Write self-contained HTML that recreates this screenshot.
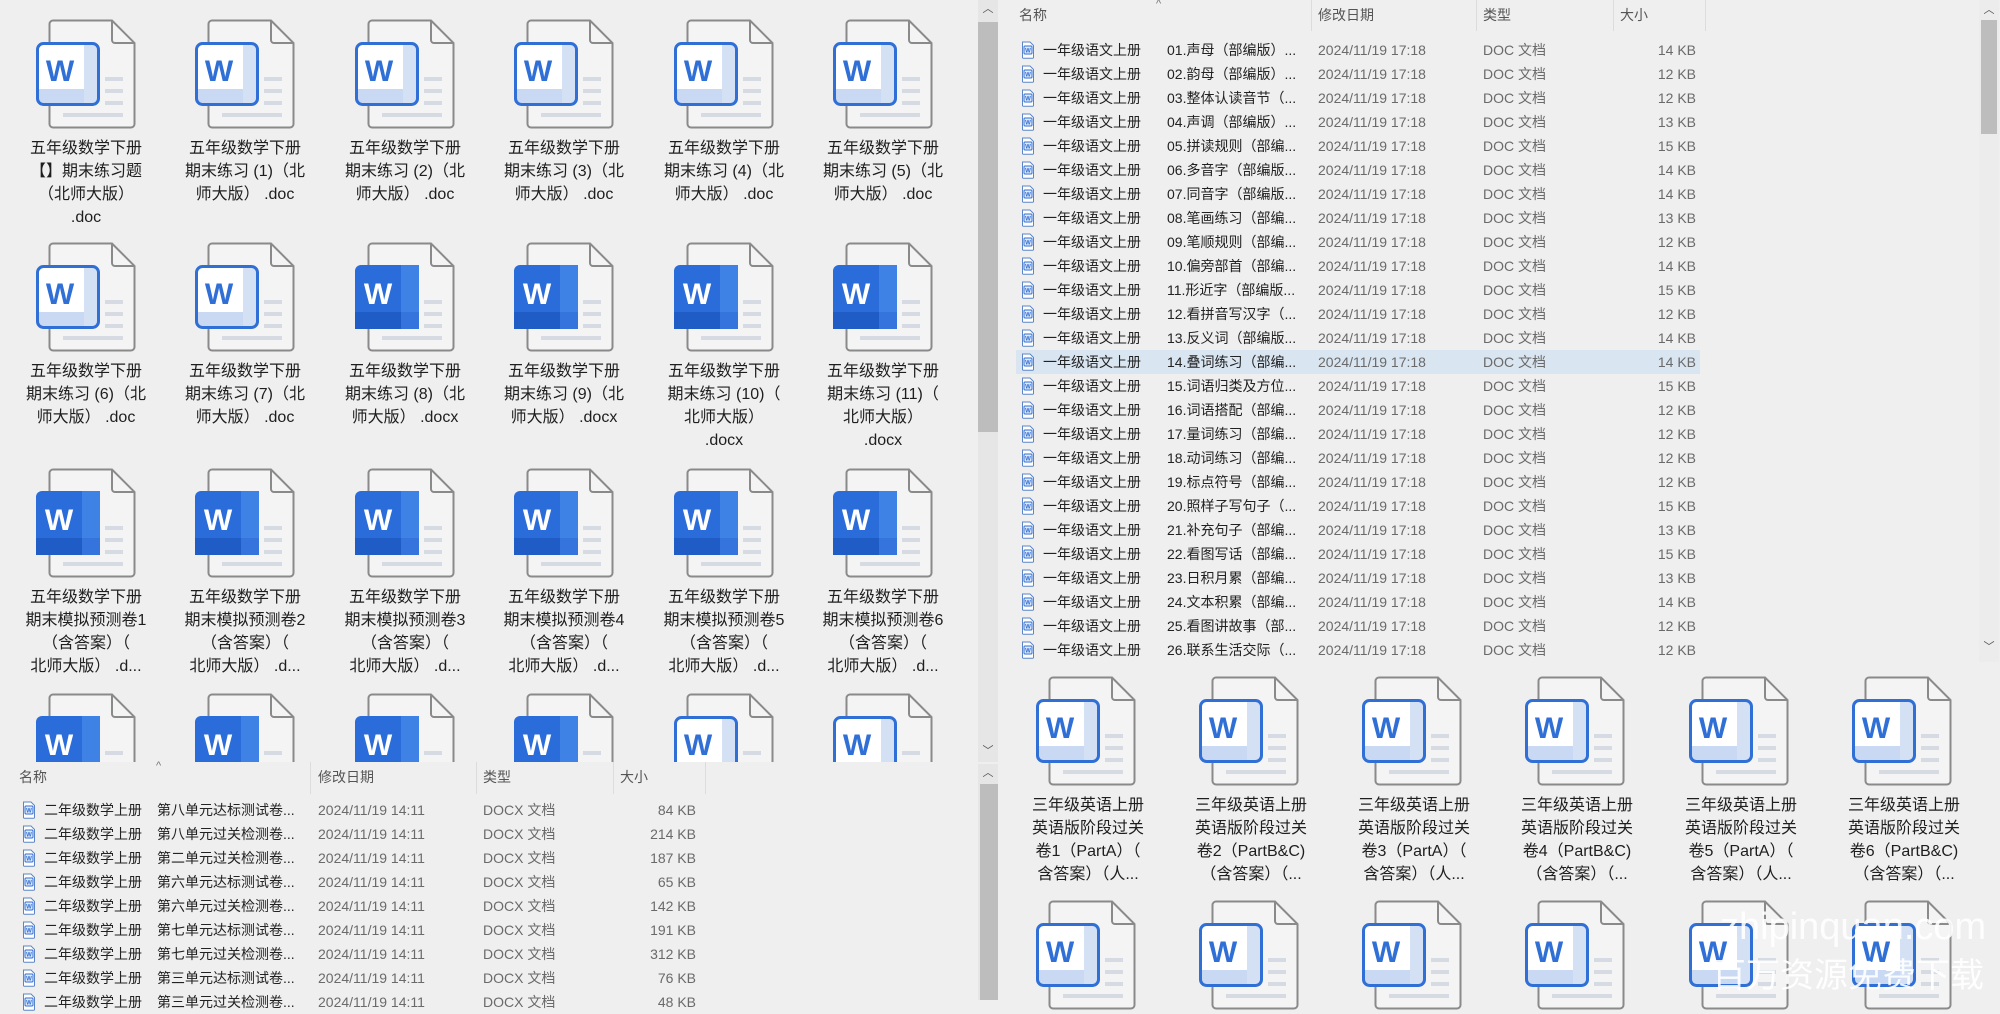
<!DOCTYPE html>
<html><head><meta charset="utf-8">
<style>
*{margin:0;padding:0;box-sizing:border-box}
body{width:2000px;height:1000px;overflow:hidden;background:#efefef;font-family:"Liberation Sans","Noto Sans CJK SC",sans-serif;position:relative;color:#222}
.a{position:absolute}
.ic{position:absolute;width:100px;height:110px}
.lb{position:absolute;width:170px;text-align:center;font-size:16px;line-height:23px;white-space:nowrap;color:#1e1e1e}
.hd{position:absolute;font-size:14px;color:#555;height:30px;line-height:30px}
.sep{position:absolute;width:1px;background:#dcdcdc}
.r{position:absolute;height:24px;line-height:24px;font-size:14px;white-space:nowrap}
.r span{position:absolute;top:0}
.g{color:#6a6a6a}
.sb{position:absolute;background:#e6e6e6;width:20px}
.th{position:absolute;background:#bdbdbd;width:20px}
.ar{position:absolute;width:20px;text-align:center;font-size:11px;color:#555;line-height:14px}
</style></head><body>
<svg width="0" height="0" style="position:absolute">
<defs>
<symbol id="pg" viewBox="0 0 100 110">
<path d="M17,1.5 H76 L98.5,24 V105 a3.5,3.5 0 0 1 -3.5,3.5 H17 a3.5,3.5 0 0 1 -3.5,-3.5 V5 a3.5,3.5 0 0 1 3.5,-3.5 Z" fill="#f4f4f4" stroke="#8a8a8a" stroke-width="2"/>
<path d="M76,1.5 V21 a3,3 0 0 0 3,3 H98.5" fill="none" stroke="#8a8a8a" stroke-width="2"/>
<rect x="69" y="58" width="18" height="4" fill="#d6dbe3"/>
<rect x="69" y="70" width="18" height="4" fill="#d6dbe3"/>
<rect x="69" y="82" width="18" height="4" fill="#d6dbe3"/>
<rect x="27" y="94" width="60" height="4" fill="#d6dbe3"/>
</symbol>
<symbol id="L" viewBox="0 0 100 110">
<use href="#pg"/>
<rect x="1.5" y="24.5" width="61" height="61" rx="6" fill="#fff"/>
<rect x="3" y="70" width="58" height="14" fill="#c9d9f3"/>
<rect x="48" y="26" width="13" height="58" fill="#d4e1f5"/>
<rect x="1.5" y="24.5" width="61" height="61" rx="6" fill="none" stroke="#2f6fd6" stroke-width="3"/>
<text x="24" y="62" font-family="Liberation Sans" font-weight="bold" font-size="30" fill="#2f6fd6" text-anchor="middle">W</text>
</symbol>
<symbol id="D" viewBox="0 0 100 110">
<use href="#pg"/>
<rect x="0" y="23" width="64" height="64" rx="6" fill="#2a6cd9"/>
<rect x="46" y="23" width="18" height="64" fill="#3f82e6"/>
<rect x="0" y="70" width="64" height="17" fill="#1f5cc6"/>
<rect x="46" y="70" width="18" height="17" fill="#3474dc"/>
<text x="23" y="62" font-family="Liberation Sans" font-weight="bold" font-size="30" fill="#fff" text-anchor="middle">W</text>
</symbol>
<symbol id="s" viewBox="0 0 14 18">
<path d="M1.5,1 H9 L12.5,4.5 V16.5 a0.8,0.8 0 0 1 -0.8,0.8 H2.3 a0.8,0.8 0 0 1 -0.8,-0.8 Z" fill="#fff" stroke="#5a86c8" stroke-width="1"/>
<rect x="3" y="5" width="8" height="8" rx="1" fill="#dfe9f8" stroke="#2f6fd6" stroke-width="1"/>
<text x="7" y="11.5" font-family="Liberation Sans" font-weight="bold" font-size="6" fill="#2f6fd6" text-anchor="middle">W</text>
</symbol>
</defs></svg>

<!-- ===== TOP-LEFT GRID ===== -->
<svg class="ic" style="left:36px;top:19px"><use href="#L"/></svg>
<svg class="ic" style="left:195px;top:19px"><use href="#L"/></svg>
<svg class="ic" style="left:355px;top:19px"><use href="#L"/></svg>
<svg class="ic" style="left:514px;top:19px"><use href="#L"/></svg>
<svg class="ic" style="left:674px;top:19px"><use href="#L"/></svg>
<svg class="ic" style="left:833px;top:19px"><use href="#L"/></svg>
<div class="lb" style="left:1px;top:137px">五年级数学下册<br>【】期末练习题<br>（北师大版）<br>.doc</div>
<div class="lb" style="left:160px;top:137px">五年级数学下册<br>期末练习 (1)（北<br>师大版） .doc</div>
<div class="lb" style="left:320px;top:137px">五年级数学下册<br>期末练习 (2)（北<br>师大版） .doc</div>
<div class="lb" style="left:479px;top:137px">五年级数学下册<br>期末练习 (3)（北<br>师大版） .doc</div>
<div class="lb" style="left:639px;top:137px">五年级数学下册<br>期末练习 (4)（北<br>师大版） .doc</div>
<div class="lb" style="left:798px;top:137px">五年级数学下册<br>期末练习 (5)（北<br>师大版） .doc</div>

<svg class="ic" style="left:36px;top:242px"><use href="#L"/></svg>
<svg class="ic" style="left:195px;top:242px"><use href="#L"/></svg>
<svg class="ic" style="left:355px;top:242px"><use href="#D"/></svg>
<svg class="ic" style="left:514px;top:242px"><use href="#D"/></svg>
<svg class="ic" style="left:674px;top:242px"><use href="#D"/></svg>
<svg class="ic" style="left:833px;top:242px"><use href="#D"/></svg>
<div class="lb" style="left:1px;top:360px">五年级数学下册<br>期末练习 (6)（北<br>师大版） .doc</div>
<div class="lb" style="left:160px;top:360px">五年级数学下册<br>期末练习 (7)（北<br>师大版） .doc</div>
<div class="lb" style="left:320px;top:360px">五年级数学下册<br>期末练习 (8)（北<br>师大版） .docx</div>
<div class="lb" style="left:479px;top:360px">五年级数学下册<br>期末练习 (9)（北<br>师大版） .docx</div>
<div class="lb" style="left:639px;top:360px">五年级数学下册<br>期末练习 (10)（<br>北师大版）<br>.docx</div>
<div class="lb" style="left:798px;top:360px">五年级数学下册<br>期末练习 (11)（<br>北师大版）<br>.docx</div>

<svg class="ic" style="left:36px;top:468px"><use href="#D"/></svg>
<svg class="ic" style="left:195px;top:468px"><use href="#D"/></svg>
<svg class="ic" style="left:355px;top:468px"><use href="#D"/></svg>
<svg class="ic" style="left:514px;top:468px"><use href="#D"/></svg>
<svg class="ic" style="left:674px;top:468px"><use href="#D"/></svg>
<svg class="ic" style="left:833px;top:468px"><use href="#D"/></svg>
<div class="lb" style="left:1px;top:586px">五年级数学下册<br>期末模拟预测卷1<br>（含答案）（<br>北师大版） .d...</div>
<div class="lb" style="left:160px;top:586px">五年级数学下册<br>期末模拟预测卷2<br>（含答案）（<br>北师大版） .d...</div>
<div class="lb" style="left:320px;top:586px">五年级数学下册<br>期末模拟预测卷3<br>（含答案）（<br>北师大版） .d...</div>
<div class="lb" style="left:479px;top:586px">五年级数学下册<br>期末模拟预测卷4<br>（含答案）（<br>北师大版） .d...</div>
<div class="lb" style="left:639px;top:586px">五年级数学下册<br>期末模拟预测卷5<br>（含答案）（<br>北师大版） .d...</div>
<div class="lb" style="left:798px;top:586px">五年级数学下册<br>期末模拟预测卷6<br>（含答案）（<br>北师大版） .d...</div>

<div class="a" style="left:0;top:0;width:978px;height:762px;overflow:hidden">
<svg class="ic" style="left:36px;top:693px"><use href="#D"/></svg>
<svg class="ic" style="left:195px;top:693px"><use href="#D"/></svg>
<svg class="ic" style="left:355px;top:693px"><use href="#D"/></svg>
<svg class="ic" style="left:514px;top:693px"><use href="#D"/></svg>
<svg class="ic" style="left:674px;top:693px"><use href="#L"/></svg>
<svg class="ic" style="left:833px;top:693px"><use href="#L"/></svg>
</div>

<!-- left scrollbars -->
<div class="sb" style="left:978px;top:0;height:762px"></div>
<div class="ar" style="left:978px;top:2px">︿</div>
<div class="th" style="left:978px;top:22px;height:410px"></div>
<div class="ar" style="left:978px;top:744px">﹀</div>
<div class="sb" style="left:978px;top:764px;height:236px"></div>
<div class="ar" style="left:978px;top:766px">︿</div>
<div class="th" style="left:980px;top:784px;height:216px;width:18px"></div>

<!-- ===== BOTTOM-LEFT LIST ===== -->
<div class="a" style="left:0;top:762px;width:978px;height:238px;background:#efefef"></div>
<div class="a" style="left:156px;top:760px;font-size:11px;color:#777">^</div>
<div class="hd" style="left:19px;top:762px">名称</div>
<div class="hd" style="left:318px;top:762px">修改日期</div>
<div class="hd" style="left:483px;top:762px">类型</div>
<div class="hd" style="left:620px;top:762px">大小</div>
<div class="sep" style="left:310px;top:762px;height:32px"></div>
<div class="sep" style="left:476px;top:762px;height:32px"></div>
<div class="sep" style="left:613px;top:762px;height:32px"></div>
<div class="sep" style="left:705px;top:762px;height:32px"></div>

<div class="r" style="left:0;top:798px;width:978px"><svg class="a" style="left:22px;top:3px;width:14px;height:18px"><use href="#s"/></svg><span style="left:44px">二年级数学上册</span><span style="left:157px">第八单元达标测试卷...</span><span class="g" style="left:318px">2024/11/19 14:11</span><span class="g" style="left:483px">DOCX 文档</span><span class="g" style="right:282px">84 KB</span></div>
<div class="r" style="left:0;top:822px;width:978px"><svg class="a" style="left:22px;top:3px;width:14px;height:18px"><use href="#s"/></svg><span style="left:44px">二年级数学上册</span><span style="left:157px">第八单元过关检测卷...</span><span class="g" style="left:318px">2024/11/19 14:11</span><span class="g" style="left:483px">DOCX 文档</span><span class="g" style="right:282px">214 KB</span></div>
<div class="r" style="left:0;top:846px;width:978px"><svg class="a" style="left:22px;top:3px;width:14px;height:18px"><use href="#s"/></svg><span style="left:44px">二年级数学上册</span><span style="left:157px">第二单元过关检测卷...</span><span class="g" style="left:318px">2024/11/19 14:11</span><span class="g" style="left:483px">DOCX 文档</span><span class="g" style="right:282px">187 KB</span></div>
<div class="r" style="left:0;top:870px;width:978px"><svg class="a" style="left:22px;top:3px;width:14px;height:18px"><use href="#s"/></svg><span style="left:44px">二年级数学上册</span><span style="left:157px">第六单元达标测试卷...</span><span class="g" style="left:318px">2024/11/19 14:11</span><span class="g" style="left:483px">DOCX 文档</span><span class="g" style="right:282px">65 KB</span></div>
<div class="r" style="left:0;top:894px;width:978px"><svg class="a" style="left:22px;top:3px;width:14px;height:18px"><use href="#s"/></svg><span style="left:44px">二年级数学上册</span><span style="left:157px">第六单元过关检测卷...</span><span class="g" style="left:318px">2024/11/19 14:11</span><span class="g" style="left:483px">DOCX 文档</span><span class="g" style="right:282px">142 KB</span></div>
<div class="r" style="left:0;top:918px;width:978px"><svg class="a" style="left:22px;top:3px;width:14px;height:18px"><use href="#s"/></svg><span style="left:44px">二年级数学上册</span><span style="left:157px">第七单元达标测试卷...</span><span class="g" style="left:318px">2024/11/19 14:11</span><span class="g" style="left:483px">DOCX 文档</span><span class="g" style="right:282px">191 KB</span></div>
<div class="r" style="left:0;top:942px;width:978px"><svg class="a" style="left:22px;top:3px;width:14px;height:18px"><use href="#s"/></svg><span style="left:44px">二年级数学上册</span><span style="left:157px">第七单元过关检测卷...</span><span class="g" style="left:318px">2024/11/19 14:11</span><span class="g" style="left:483px">DOCX 文档</span><span class="g" style="right:282px">312 KB</span></div>
<div class="r" style="left:0;top:966px;width:978px"><svg class="a" style="left:22px;top:3px;width:14px;height:18px"><use href="#s"/></svg><span style="left:44px">二年级数学上册</span><span style="left:157px">第三单元达标测试卷...</span><span class="g" style="left:318px">2024/11/19 14:11</span><span class="g" style="left:483px">DOCX 文档</span><span class="g" style="right:282px">76 KB</span></div>
<div class="r" style="left:0;top:990px;width:978px"><svg class="a" style="left:22px;top:3px;width:14px;height:18px"><use href="#s"/></svg><span style="left:44px">二年级数学上册</span><span style="left:157px">第三单元过关检测卷...</span><span class="g" style="left:318px">2024/11/19 14:11</span><span class="g" style="left:483px">DOCX 文档</span><span class="g" style="right:282px">48 KB</span></div>

<!-- ===== RIGHT LIST ===== -->
<div class="a" style="left:1156px;top:-2px;font-size:11px;color:#777">^</div>
<div class="hd" style="left:1019px;top:0">名称</div>
<div class="hd" style="left:1318px;top:0">修改日期</div>
<div class="hd" style="left:1483px;top:0">类型</div>
<div class="hd" style="left:1620px;top:0">大小</div>
<div class="sep" style="left:1311px;top:0;height:31px"></div>
<div class="sep" style="left:1476px;top:0;height:31px"></div>
<div class="sep" style="left:1613px;top:0;height:31px"></div>
<div class="sep" style="left:1705px;top:0;height:31px"></div>

<div class="a" style="left:1016px;top:350px;width:684px;height:24px;background:#d9e5f1"></div>

<div class="a" style="left:1000px;top:38px;width:978px">
<div class="r" style="left:0;top:0;width:978px"><svg class="a" style="left:21px;top:3px;width:14px;height:18px"><use href="#s"/></svg><span style="left:43px">一年级语文上册</span><span style="left:167px">01.声母（部编版）...</span><span class="g" style="left:318px">2024/11/19 17:18</span><span class="g" style="left:483px">DOC 文档</span><span class="g" style="right:282px">14 KB</span></div>
<div class="r" style="left:0;top:24px;width:978px"><svg class="a" style="left:21px;top:3px;width:14px;height:18px"><use href="#s"/></svg><span style="left:43px">一年级语文上册</span><span style="left:167px">02.韵母（部编版）...</span><span class="g" style="left:318px">2024/11/19 17:18</span><span class="g" style="left:483px">DOC 文档</span><span class="g" style="right:282px">12 KB</span></div>
<div class="r" style="left:0;top:48px;width:978px"><svg class="a" style="left:21px;top:3px;width:14px;height:18px"><use href="#s"/></svg><span style="left:43px">一年级语文上册</span><span style="left:167px">03.整体认读音节（...</span><span class="g" style="left:318px">2024/11/19 17:18</span><span class="g" style="left:483px">DOC 文档</span><span class="g" style="right:282px">12 KB</span></div>
<div class="r" style="left:0;top:72px;width:978px"><svg class="a" style="left:21px;top:3px;width:14px;height:18px"><use href="#s"/></svg><span style="left:43px">一年级语文上册</span><span style="left:167px">04.声调（部编版）...</span><span class="g" style="left:318px">2024/11/19 17:18</span><span class="g" style="left:483px">DOC 文档</span><span class="g" style="right:282px">13 KB</span></div>
<div class="r" style="left:0;top:96px;width:978px"><svg class="a" style="left:21px;top:3px;width:14px;height:18px"><use href="#s"/></svg><span style="left:43px">一年级语文上册</span><span style="left:167px">05.拼读规则（部编...</span><span class="g" style="left:318px">2024/11/19 17:18</span><span class="g" style="left:483px">DOC 文档</span><span class="g" style="right:282px">15 KB</span></div>
<div class="r" style="left:0;top:120px;width:978px"><svg class="a" style="left:21px;top:3px;width:14px;height:18px"><use href="#s"/></svg><span style="left:43px">一年级语文上册</span><span style="left:167px">06.多音字（部编版...</span><span class="g" style="left:318px">2024/11/19 17:18</span><span class="g" style="left:483px">DOC 文档</span><span class="g" style="right:282px">14 KB</span></div>
<div class="r" style="left:0;top:144px;width:978px"><svg class="a" style="left:21px;top:3px;width:14px;height:18px"><use href="#s"/></svg><span style="left:43px">一年级语文上册</span><span style="left:167px">07.同音字（部编版...</span><span class="g" style="left:318px">2024/11/19 17:18</span><span class="g" style="left:483px">DOC 文档</span><span class="g" style="right:282px">14 KB</span></div>
<div class="r" style="left:0;top:168px;width:978px"><svg class="a" style="left:21px;top:3px;width:14px;height:18px"><use href="#s"/></svg><span style="left:43px">一年级语文上册</span><span style="left:167px">08.笔画练习（部编...</span><span class="g" style="left:318px">2024/11/19 17:18</span><span class="g" style="left:483px">DOC 文档</span><span class="g" style="right:282px">13 KB</span></div>
<div class="r" style="left:0;top:192px;width:978px"><svg class="a" style="left:21px;top:3px;width:14px;height:18px"><use href="#s"/></svg><span style="left:43px">一年级语文上册</span><span style="left:167px">09.笔顺规则（部编...</span><span class="g" style="left:318px">2024/11/19 17:18</span><span class="g" style="left:483px">DOC 文档</span><span class="g" style="right:282px">12 KB</span></div>
<div class="r" style="left:0;top:216px;width:978px"><svg class="a" style="left:21px;top:3px;width:14px;height:18px"><use href="#s"/></svg><span style="left:43px">一年级语文上册</span><span style="left:167px">10.偏旁部首（部编...</span><span class="g" style="left:318px">2024/11/19 17:18</span><span class="g" style="left:483px">DOC 文档</span><span class="g" style="right:282px">14 KB</span></div>
<div class="r" style="left:0;top:240px;width:978px"><svg class="a" style="left:21px;top:3px;width:14px;height:18px"><use href="#s"/></svg><span style="left:43px">一年级语文上册</span><span style="left:167px">11.形近字（部编版...</span><span class="g" style="left:318px">2024/11/19 17:18</span><span class="g" style="left:483px">DOC 文档</span><span class="g" style="right:282px">15 KB</span></div>
<div class="r" style="left:0;top:264px;width:978px"><svg class="a" style="left:21px;top:3px;width:14px;height:18px"><use href="#s"/></svg><span style="left:43px">一年级语文上册</span><span style="left:167px">12.看拼音写汉字（...</span><span class="g" style="left:318px">2024/11/19 17:18</span><span class="g" style="left:483px">DOC 文档</span><span class="g" style="right:282px">12 KB</span></div>
<div class="r" style="left:0;top:288px;width:978px"><svg class="a" style="left:21px;top:3px;width:14px;height:18px"><use href="#s"/></svg><span style="left:43px">一年级语文上册</span><span style="left:167px">13.反义词（部编版...</span><span class="g" style="left:318px">2024/11/19 17:18</span><span class="g" style="left:483px">DOC 文档</span><span class="g" style="right:282px">14 KB</span></div>
<div class="r" style="left:0;top:312px;width:978px"><svg class="a" style="left:21px;top:3px;width:14px;height:18px"><use href="#s"/></svg><span style="left:43px">一年级语文上册</span><span style="left:167px">14.叠词练习（部编...</span><span class="g" style="left:318px">2024/11/19 17:18</span><span class="g" style="left:483px">DOC 文档</span><span class="g" style="right:282px">14 KB</span></div>
<div class="r" style="left:0;top:336px;width:978px"><svg class="a" style="left:21px;top:3px;width:14px;height:18px"><use href="#s"/></svg><span style="left:43px">一年级语文上册</span><span style="left:167px">15.词语归类及方位...</span><span class="g" style="left:318px">2024/11/19 17:18</span><span class="g" style="left:483px">DOC 文档</span><span class="g" style="right:282px">15 KB</span></div>
<div class="r" style="left:0;top:360px;width:978px"><svg class="a" style="left:21px;top:3px;width:14px;height:18px"><use href="#s"/></svg><span style="left:43px">一年级语文上册</span><span style="left:167px">16.词语搭配（部编...</span><span class="g" style="left:318px">2024/11/19 17:18</span><span class="g" style="left:483px">DOC 文档</span><span class="g" style="right:282px">12 KB</span></div>
<div class="r" style="left:0;top:384px;width:978px"><svg class="a" style="left:21px;top:3px;width:14px;height:18px"><use href="#s"/></svg><span style="left:43px">一年级语文上册</span><span style="left:167px">17.量词练习（部编...</span><span class="g" style="left:318px">2024/11/19 17:18</span><span class="g" style="left:483px">DOC 文档</span><span class="g" style="right:282px">12 KB</span></div>
<div class="r" style="left:0;top:408px;width:978px"><svg class="a" style="left:21px;top:3px;width:14px;height:18px"><use href="#s"/></svg><span style="left:43px">一年级语文上册</span><span style="left:167px">18.动词练习（部编...</span><span class="g" style="left:318px">2024/11/19 17:18</span><span class="g" style="left:483px">DOC 文档</span><span class="g" style="right:282px">12 KB</span></div>
<div class="r" style="left:0;top:432px;width:978px"><svg class="a" style="left:21px;top:3px;width:14px;height:18px"><use href="#s"/></svg><span style="left:43px">一年级语文上册</span><span style="left:167px">19.标点符号（部编...</span><span class="g" style="left:318px">2024/11/19 17:18</span><span class="g" style="left:483px">DOC 文档</span><span class="g" style="right:282px">12 KB</span></div>
<div class="r" style="left:0;top:456px;width:978px"><svg class="a" style="left:21px;top:3px;width:14px;height:18px"><use href="#s"/></svg><span style="left:43px">一年级语文上册</span><span style="left:167px">20.照样子写句子（...</span><span class="g" style="left:318px">2024/11/19 17:18</span><span class="g" style="left:483px">DOC 文档</span><span class="g" style="right:282px">15 KB</span></div>
<div class="r" style="left:0;top:480px;width:978px"><svg class="a" style="left:21px;top:3px;width:14px;height:18px"><use href="#s"/></svg><span style="left:43px">一年级语文上册</span><span style="left:167px">21.补充句子（部编...</span><span class="g" style="left:318px">2024/11/19 17:18</span><span class="g" style="left:483px">DOC 文档</span><span class="g" style="right:282px">13 KB</span></div>
<div class="r" style="left:0;top:504px;width:978px"><svg class="a" style="left:21px;top:3px;width:14px;height:18px"><use href="#s"/></svg><span style="left:43px">一年级语文上册</span><span style="left:167px">22.看图写话（部编...</span><span class="g" style="left:318px">2024/11/19 17:18</span><span class="g" style="left:483px">DOC 文档</span><span class="g" style="right:282px">15 KB</span></div>
<div class="r" style="left:0;top:528px;width:978px"><svg class="a" style="left:21px;top:3px;width:14px;height:18px"><use href="#s"/></svg><span style="left:43px">一年级语文上册</span><span style="left:167px">23.日积月累（部编...</span><span class="g" style="left:318px">2024/11/19 17:18</span><span class="g" style="left:483px">DOC 文档</span><span class="g" style="right:282px">13 KB</span></div>
<div class="r" style="left:0;top:552px;width:978px"><svg class="a" style="left:21px;top:3px;width:14px;height:18px"><use href="#s"/></svg><span style="left:43px">一年级语文上册</span><span style="left:167px">24.文本积累（部编...</span><span class="g" style="left:318px">2024/11/19 17:18</span><span class="g" style="left:483px">DOC 文档</span><span class="g" style="right:282px">14 KB</span></div>
<div class="r" style="left:0;top:576px;width:978px"><svg class="a" style="left:21px;top:3px;width:14px;height:18px"><use href="#s"/></svg><span style="left:43px">一年级语文上册</span><span style="left:167px">25.看图讲故事（部...</span><span class="g" style="left:318px">2024/11/19 17:18</span><span class="g" style="left:483px">DOC 文档</span><span class="g" style="right:282px">12 KB</span></div>
<div class="r" style="left:0;top:600px;width:978px"><svg class="a" style="left:21px;top:3px;width:14px;height:18px"><use href="#s"/></svg><span style="left:43px">一年级语文上册</span><span style="left:167px">26.联系生活交际（...</span><span class="g" style="left:318px">2024/11/19 17:18</span><span class="g" style="left:483px">DOC 文档</span><span class="g" style="right:282px">12 KB</span></div>
</div>

<!-- right scrollbar -->
<div class="sb" style="left:1979px;top:0;height:662px;background:#ececec"></div>
<div class="ar" style="left:1979px;top:3px">︿</div>
<div class="th" style="left:1981px;top:20px;height:114px;width:16px"></div>
<div class="ar" style="left:1979px;top:640px">﹀</div>

<!-- ===== RIGHT GRID ===== -->
<svg class="ic" style="left:1036px;top:676px"><use href="#L"/></svg>
<svg class="ic" style="left:1199px;top:676px"><use href="#L"/></svg>
<svg class="ic" style="left:1362px;top:676px"><use href="#L"/></svg>
<svg class="ic" style="left:1525px;top:676px"><use href="#L"/></svg>
<svg class="ic" style="left:1689px;top:676px"><use href="#L"/></svg>
<svg class="ic" style="left:1852px;top:676px"><use href="#L"/></svg>
<div class="lb" style="left:1003px;top:794px">三年级英语上册<br>英语版阶段过关<br>卷1（PartA）（<br>含答案）（人...</div>
<div class="lb" style="left:1166px;top:794px">三年级英语上册<br>英语版阶段过关<br>卷2（PartB&amp;C)<br>（含答案）（...</div>
<div class="lb" style="left:1329px;top:794px">三年级英语上册<br>英语版阶段过关<br>卷3（PartA）（<br>含答案）（人...</div>
<div class="lb" style="left:1492px;top:794px">三年级英语上册<br>英语版阶段过关<br>卷4（PartB&amp;C)<br>（含答案）（...</div>
<div class="lb" style="left:1656px;top:794px">三年级英语上册<br>英语版阶段过关<br>卷5（PartA）（<br>含答案）（人...</div>
<div class="lb" style="left:1819px;top:794px">三年级英语上册<br>英语版阶段过关<br>卷6（PartB&amp;C)<br>（含答案）（...</div>
<svg class="ic" style="left:1036px;top:900px"><use href="#L"/></svg>
<svg class="ic" style="left:1199px;top:900px"><use href="#L"/></svg>
<svg class="ic" style="left:1362px;top:900px"><use href="#L"/></svg>
<svg class="ic" style="left:1525px;top:900px"><use href="#L"/></svg>
<svg class="ic" style="left:1689px;top:900px"><use href="#L"/></svg>
<svg class="ic" style="left:1852px;top:900px"><use href="#L"/></svg>

<!-- watermark -->
<div class="a" style="left:1720px;top:904px;font-size:38px;line-height:46px;color:rgba(255,255,255,0.88);white-space:nowrap">zhipinquan.com</div>
<div class="a" style="left:1712px;top:952px;font-size:34px;line-height:42px;color:rgba(255,255,255,0.9);white-space:nowrap;font-family:'Noto Sans CJK SC',sans-serif">百万资源免费下载</div>
</body></html>
